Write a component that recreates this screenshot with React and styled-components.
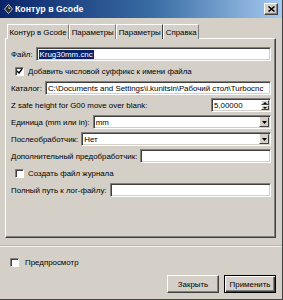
import React from "react";
import styled, { createGlobalStyle } from "styled-components";

const GlobalStyle = createGlobalStyle`
    html, body {
        margin: 0;
        padding: 0;
        background: #d4d0c8;
    }
    body {
        font-family: "Liberation Sans", Arial, sans-serif;
        font-size: 7.9px;
        color: #000;
    }
`

//window
const Window = styled.div`
    width: 283px;
    height: 300px;
    box-sizing: border-box;
    display: flex;
    flex-direction: column;
    background: #d4d0c8;
    border-right: 1px solid #404040;
    border-bottom: 1px solid #404040;
    overflow: hidden;
`
const TitleBar = styled.div`
    height: 18px;
    flex-shrink: 0;
    display: flex;
    align-items: center;
    padding: 0 4px 0 4px;
    gap: 2px;
    background: linear-gradient(to right, #0a246a 0%, #3a6ea5 55%, #a6caf0 100%);
    color: #fff;
    font-weight: bold;
    font-size: 8.8px;
`
const TitleText = styled.span`
    flex: 1;
    white-space: nowrap;
`
const CloseButton = styled.div`
    width: 14px;
    height: 12px;
    box-sizing: border-box;
    display: flex;
    align-items: center;
    justify-content: center;
    background: #d4d0c8;
    border: 1px solid;
    border-color: #fff #404040 #404040 #fff;
    box-shadow: inset -1px -1px 0 #808080;
`

//tabs
const Body = styled.div`
    flex: 1;
    display: flex;
    flex-direction: column;
    padding: 6px 6px 0 5px;
`
const TabStrip = styled.div`
    display: flex;
    padding-left: 2px;
    height: 14px;
`
const Tab = styled.div`
    box-sizing: border-box;
    height: 15px;
    padding: 0 1.5px;
    display: flex;
    align-items: center;
    white-space: nowrap;
    background: #d4d0c8;
    border-top: 1px solid #fff;
    border-left: 1px solid #fff;
    border-right: 1px solid ${p => p.$active ? "#404040" : "#808080"};
    position: relative;
    z-index: ${p => p.$active ? 2 : 1};
`
const Panel = styled.div`
    height: 200px;
    box-sizing: border-box;
    border: 1px solid;
    border-color: #fff #404040 #404040 #fff;
    box-shadow: inset -1px -1px 0 #808080;
    padding: 8px 4px 0 5px;
    display: flex;
    flex-direction: column;
    gap: 3px;
`
const Row = styled.div`
    height: 14px;
    display: flex;
    align-items: center;
    gap: ${p => p.$gap || 3}px;
    padding-left: ${p => p.$indent || 0}px;
    white-space: nowrap;
`
const Label = styled.span`
    flex-shrink: 0;
`
const Spacer = styled.div`
    flex: 1;
`

//fields
const Field = styled.div`
    box-sizing: border-box;
    height: 14px;
    flex: ${p => p.$width ? "none" : 1};
    width: ${p => p.$width ? p.$width + "px" : "auto"};
    min-width: 0;
    display: flex;
    align-items: center;
    background: #fff;
    border: 1px solid;
    border-color: #808080 #fff #fff #808080;
    box-shadow: inset 1px 1px 0 #404040, inset -1px -1px 0 #d4d0c8;
    padding: 0 1px 0 2px;
    overflow: hidden;
`
const FieldText = styled.span`
    flex: 1;
    overflow: hidden;
    white-space: nowrap;
`
const Selected = styled.span`
    background: #0a246a;
    color: #fff;
    padding: 0 1px;
`
const ArrowButton = styled.div`
    box-sizing: border-box;
    width: 10px;
    height: 10px;
    flex-shrink: 0;
    display: flex;
    align-items: center;
    justify-content: center;
    background: #d4d0c8;
    border: 1px solid;
    border-color: #d4d0c8 #404040 #404040 #fff;
`
const SpinButtons = styled.div`
    display: flex;
    flex-direction: column;
    flex-shrink: 0;
`
const SpinButton = styled.div`
    box-sizing: border-box;
    width: 8px;
    height: 5px;
    display: flex;
    align-items: center;
    justify-content: center;
    background: #d4d0c8;
    border: 1px solid;
    border-color: #fff #404040 #404040 #fff;
`

//checkbox
const Box = styled.div`
    box-sizing: border-box;
    width: 9px;
    height: 9px;
    flex-shrink: 0;
    background: #fff;
    border: 1px solid;
    border-color: #808080 #fff #fff #808080;
    box-shadow: inset 1px 1px 0 #404040;
    display: flex;
    align-items: center;
    justify-content: center;
`

//footer
const Separator = styled.div`
    height: 0;
    border-top: 1px solid #b8b4ac;
    border-bottom: 1px solid #f4f2ee;
    margin: 7px -6px 0 -5px;
`
const Footer = styled.div`
    display: flex;
    flex-direction: column;
`
const PreviewRow = styled(Row)`
    margin-top: 8px;
    padding-left: 5px;
    gap: 6px;
`
const Buttons = styled.div`
    display: flex;
    justify-content: flex-end;
    gap: 5px;
    margin-top: 6px;
`
const Button = styled.div`
    box-sizing: border-box;
    width: ${p => p.$width}px;
    height: 18px;
    display: flex;
    align-items: center;
    justify-content: center;
    background: #d4d0c8;
    border: 1px solid;
    border-color: ${p => p.$default ? "#000" : "#fff #404040 #404040 #fff"};
    box-shadow: ${p => p.$default
        ? "inset 1px 1px 0 #fff, inset -1px -1px 0 #404040, inset -2px -2px 0 #808080"
        : "inset -1px -1px 0 #808080"};
`

function Checkbox({ checked }) {
    return (
        <Box>
            {checked ?
                <svg width="7" height="7" viewBox="0 0 7 7">
                    <polyline points="1,3 3,5 6,1" fill="none" stroke="#000" strokeWidth="1.4" />
                </svg>
            : null}
        </Box>
    )
}

function DownArrow() {
    return (
        <svg width="5" height="3" viewBox="0 0 5 3">
            <polygon points="0,0 5,0 2.5,3" fill="#000" />
        </svg>
    )
}

function Combo({ value }) {
    return (
        <Field>
            <FieldText>{value}</FieldText>
            <ArrowButton><DownArrow /></ArrowButton>
        </Field>
    )
}

function AppIcon() {
    return (
        <svg width="9" height="10" viewBox="0 0 9 10">
            <polygon points="4.5,0.5 8.5,5 4.5,9.5 0.5,5" fill="#2b2b2b" stroke="#e8e8e8" strokeWidth="0.8" />
            <polygon points="4.5,2 6.5,5 4.5,5" fill="#bbb" />
        </svg>
    )
}

export default function App() {
    return (
        <>
            <GlobalStyle />
            <Window>
                <TitleBar>
                    <AppIcon />
                    <TitleText>Контур в Gcode</TitleText>
                    <CloseButton>
                        <svg width="7" height="6" viewBox="0 0 7 6">
                            <path d="M0.5 0.5 L6.5 5.5 M6.5 0.5 L0.5 5.5" stroke="#000" strokeWidth="1.5" />
                        </svg>
                    </CloseButton>
                </TitleBar>
                <Body>
                    <TabStrip>
                        <Tab>Контур в Gcode</Tab>
                        <Tab>Параметры</Tab>
                        <Tab $active>Параметры</Tab>
                        <Tab>Справка</Tab>
                    </TabStrip>
                    <Panel>
                        <Row>
                            <Label>Файл:</Label>
                            <Field><FieldText><Selected>Krug30mm.cnc</Selected></FieldText></Field>
                        </Row>
                        <Row $indent={4} $gap={4}>
                            <Checkbox checked />
                            <Label>Добавить числовой суффикс к имени файла</Label>
                        </Row>
                        <Row>
                            <Label>Каталог:</Label>
                            <Field><FieldText>C:\Documents and Settings\i.kunitsin\Рабочий стол\Turbocnc</FieldText></Field>
                        </Row>
                        <Row>
                            <Label>Z safe height for G00 move over blank:</Label>
                            <Spacer />
                            <Field $width={60}>
                                <FieldText>5,00000</FieldText>
                                <SpinButtons>
                                    <SpinButton>
                                        <svg width="4" height="2" viewBox="0 0 4 2"><polygon points="0,2 4,2 2,0" fill="#000" /></svg>
                                    </SpinButton>
                                    <SpinButton>
                                        <svg width="4" height="2" viewBox="0 0 4 2"><polygon points="0,0 4,0 2,2" fill="#000" /></svg>
                                    </SpinButton>
                                </SpinButtons>
                            </Field>
                        </Row>
                        <Row>
                            <Label>Единица (mm или in):</Label>
                            <Combo value="mm" />
                        </Row>
                        <Row>
                            <Label>Послеобработчик:</Label>
                            <Combo value="Нет" />
                        </Row>
                        <Row>
                            <Label>Дополнительный предобработчик:</Label>
                            <Field><FieldText></FieldText></Field>
                        </Row>
                        <Row $indent={4} $gap={4}>
                            <Checkbox />
                            <Label>Создать файл журнала</Label>
                        </Row>
                        <Row>
                            <Label>Полный путь к лог-файлу:</Label>
                            <Field><FieldText></FieldText></Field>
                        </Row>
                    </Panel>
                    <Footer>
                        <Separator />
                        <PreviewRow>
                            <Checkbox />
                            <Label>Предпросмотр</Label>
                        </PreviewRow>
                        <Buttons>
                            <Button $width={52}>Закрыть</Button>
                            <Button $width={52} $default>Применить</Button>
                        </Buttons>
                    </Footer>
                </Body>
            </Window>
        </>
    )
}
